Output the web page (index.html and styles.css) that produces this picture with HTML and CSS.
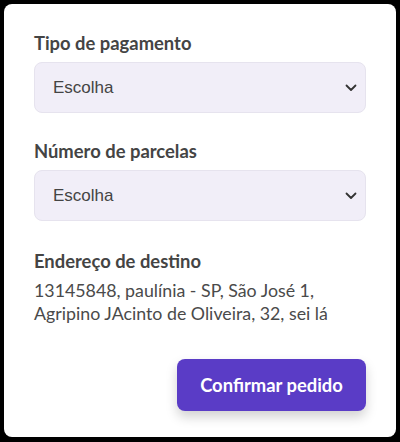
FILE: index.html
```html
<!DOCTYPE html>
<html lang="pt">
<head>
<meta charset="utf-8">
<link rel="stylesheet" href="styles.css">
</head>
<body>
<div class="card">
  <div class="field">
    <label class="label">Tipo de pagamento</label>
    <div class="select">
      <span>Escolha</span>
      <svg class="chev" width="12" height="8" viewBox="0 0 12 8"><path d="M1.5 1.5 L6 6 L10.5 1.5" fill="none" stroke="#333" stroke-width="1.8" stroke-linecap="round" stroke-linejoin="round"/></svg>
    </div>
  </div>
  <div class="field">
    <label class="label">Número de parcelas</label>
    <div class="select">
      <span>Escolha</span>
      <svg class="chev" width="12" height="8" viewBox="0 0 12 8"><path d="M1.5 1.5 L6 6 L10.5 1.5" fill="none" stroke="#333" stroke-width="1.8" stroke-linecap="round" stroke-linejoin="round"/></svg>
    </div>
  </div>
  <div class="field address-field">
    <div class="label">Endereço de destino</div>
    <p class="address">13145848, paulínia - SP, São José 1, Agripino JAcinto de Oliveira, 32, sei lá</p>
  </div>
  <div class="actions">
    <button class="btn">Confirmar pedido</button>
  </div>
</div>
</body>
</html>
```
FILE: styles.css
```css
html, body {
  margin: 0;
  padding: 0;
  background: #000;
}
body {
  padding: 4px;
  width: 400px;
  height: 442px;
  box-sizing: border-box;
}
.card {
  width: 392px;
  height: 433px;
  box-sizing: border-box;
  background: #fff;
  border-radius: 8px;
  padding: 28px 30px 0 30px;
  display: flex;
  flex-direction: column;
  font-family: Lato, "Open Sans", sans-serif;
  color: #454545;
}
.field {
  display: flex;
  flex-direction: column;
  margin-bottom: 27px;
}
.address-field {
  margin-top: 2px;
  margin-bottom: 34px;
}
.label {
  font-size: 18.4px;
  font-weight: 700;
  line-height: 22px;
  margin-bottom: 8px;
  color: #444;
}
.select {
  height: 51px;
  box-sizing: border-box;
  background: #f1eef8;
  border: 1px solid #e6e3ee;
  border-radius: 8px;
  display: flex;
  align-items: center;
  justify-content: space-between;
  padding: 0 8px 0 18px;
  font-family: "Liberation Sans", Arial, sans-serif;
  font-size: 17px;
  color: #444;
}
.chev {
  display: block;
}
.address {
  margin: -1px 0 0;
  font-size: 17.8px;
  line-height: 23px;
  color: #4a4a4a;
}
.actions {
  display: flex;
  justify-content: flex-end;
}
.btn {
  width: 189px;
  height: 52px;
  border: none;
  border-radius: 8px;
  background: #5a3cc6;
  color: #fff;
  font-family: Lato, "Open Sans", sans-serif;
  font-weight: 700;
  font-size: 18.4px;
  box-shadow: 0 6px 12px rgba(0,0,0,0.18);
}
```
